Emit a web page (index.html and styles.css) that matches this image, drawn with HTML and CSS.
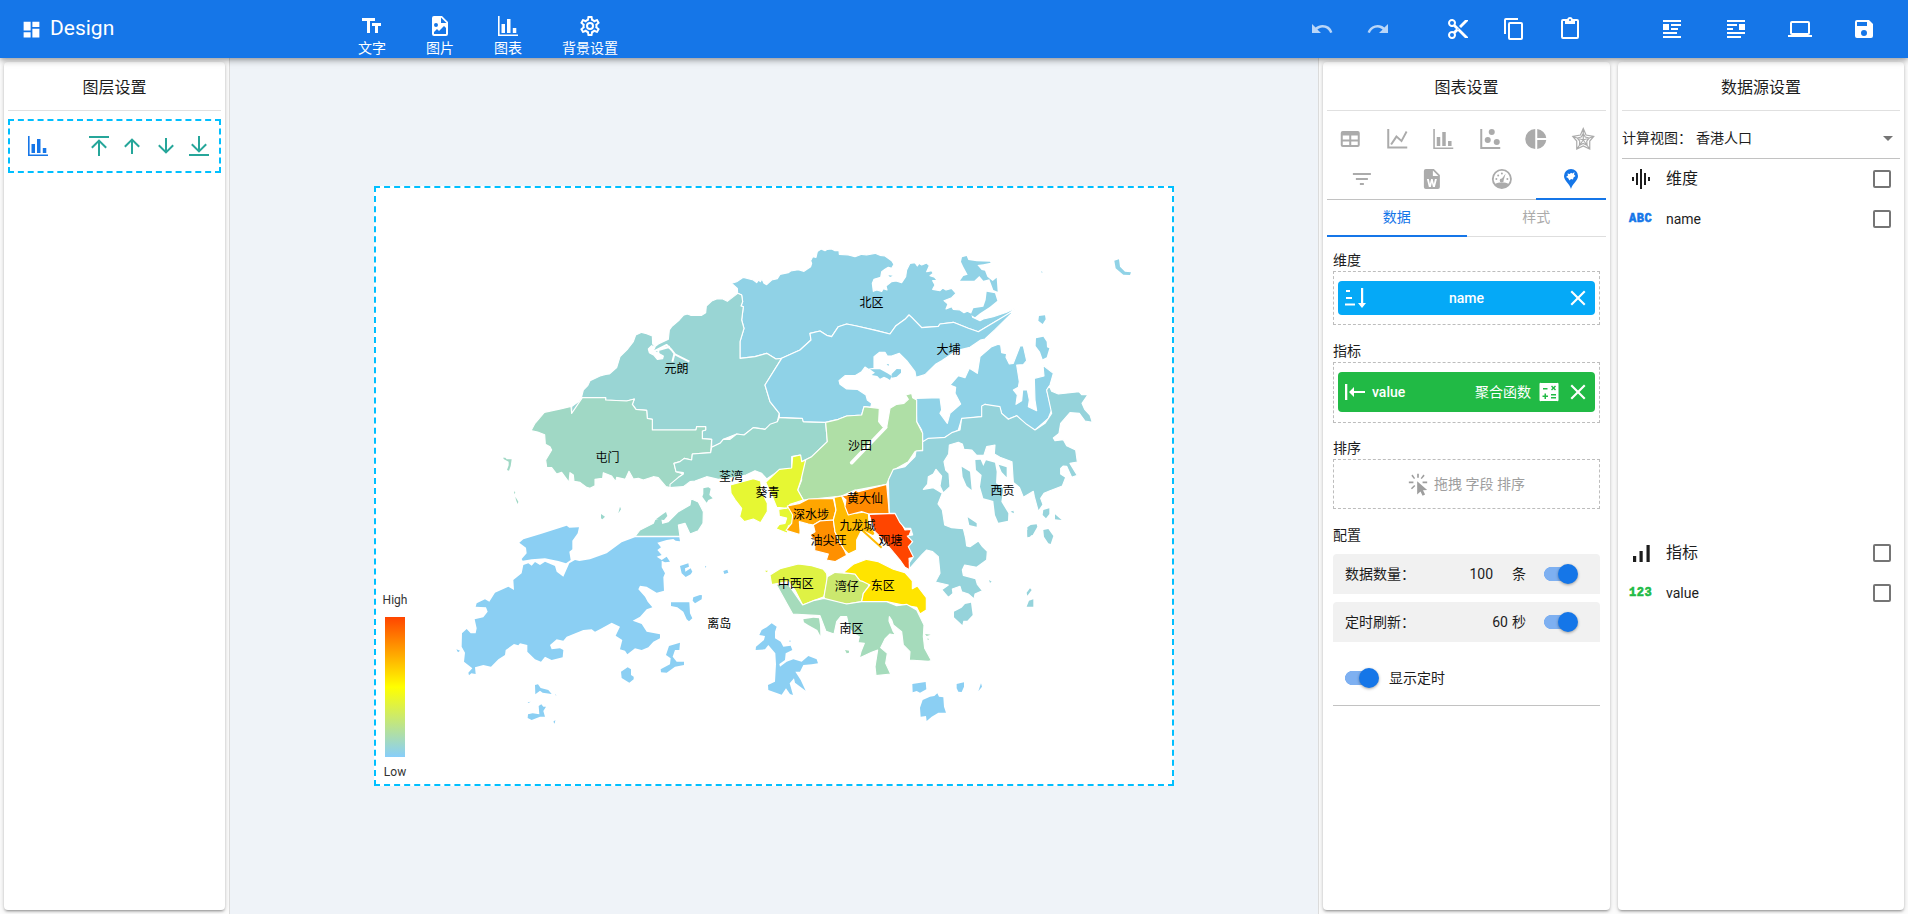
FILE: index.html
```html
<!DOCTYPE html>
<html lang="zh-CN">
<head>
<meta charset="utf-8">
<title>Design</title>
<link rel="stylesheet" href="styles.css">
</head>
<body>
<svg class="defs" width="0" height="0">
  <defs>
    <symbol id="bar" viewBox="0 0 24 24"><path d="M2 2h1.600v18.400H22V22H2zM5.500 10h3.500v9H5.500zM11 5h3.500v14H11zM16.800 14h3.500v5h-3.500z"/></symbol>
    <symbol id="up" viewBox="0 0 24 24"><path d="M13 20h-2V8l-5.500 5.500-1.400-1.400L12 4.200l7.900 7.900-1.400 1.400L13 8z"/></symbol>
    <symbol id="down" viewBox="0 0 24 24"><path d="M11 4h2v12l5.500-5.500 1.400 1.400L12 19.800l-7.900-7.900 1.400-1.400L11 16z"/></symbol>
    <symbol id="close" viewBox="0 0 24 24"><path d="M19.500 6L18 4.500l-6 6-6-6L4.500 6l6 6-6 6L6 19.500l6-6 6 6 1.500-1.500-6-6z"/></symbol>
  </defs>
</svg>

<header class="topbar">
  <div class="brand">
    <svg class="brand-icon" viewBox="0 0 24 24"><path d="M3 3h8v10H3zM13 3h8v6h-8zM3 15h8v6H3zM13 11h8v10h-8z"/></svg>
    <span>Design</span>
  </div>
  <nav class="inserts">
    <div class="insert"><svg class="icon" viewBox="0 0 24 24"><path d="M2 4v3h5v12h3V7h5V4zM21 9h-9v3h3v7h3v-7h3z"/></svg><span>文字</span></div>
    <div class="insert"><svg class="icon" viewBox="0 0 24 24"><path fill-rule="evenodd" d="M14 2H6a2 2 0 0 0-2 2v16a2 2 0 0 0 2 2h12a2 2 0 0 0 2-2V8zM13 3.500L18.500 9H13zM8 9a2 2 0 1 1 0 4 2 2 0 0 1 0-4zM6 20v-2l3-3 2 2 5-5 2 2v6z"/></svg><span>图片</span></div>
    <div class="insert"><svg class="icon"><use href="#bar"/></svg><span>图表</span></div>
    <div class="insert insert-wide"><svg class="icon" viewBox="0 0 24 24"><path d="M12 8a4 4 0 1 1 0 8 4 4 0 0 1 0-8m0 2a2 2 0 1 0 0 4 2 2 0 0 0 0-4m-2 12c-.250 0-.460-.180-.500-.420l-.370-2.650c-.630-.250-1.170-.590-1.690-.990l-2.490 1.010c-.220.080-.490 0-.610-.220l-2-3.460c-.130-.220-.070-.490.120-.640l2.110-1.660L4.500 12l.070-1-2.110-1.630c-.190-.150-.250-.420-.120-.640l2-3.460c.120-.220.390-.310.610-.220l2.490 1c.520-.390 1.060-.730 1.690-.980l.370-2.650c.040-.240.250-.420.500-.420h4c.250 0 .460.180.500.420l.370 2.650c.630.250 1.170.590 1.690.980l2.490-1c.220-.090.490 0 .610.220l2 3.460c.130.220.070.490-.120.640L19.430 11l.070 1-.070 1 2.110 1.630c.190.150.250.420.120.640l-2 3.460c-.120.220-.390.310-.610.220l-2.490-1c-.520.390-1.060.730-1.690.980l-.370 2.650c-.040.240-.250.420-.500.420zm1.250-18l-.370 2.610c-1.200.250-2.260.890-3.030 1.780L5.440 7.350l-.750 1.300L6.800 10.200a5.500 5.500 0 0 0 0 3.600l-2.120 1.560.750 1.300 2.430-1.040c.770.880 1.820 1.520 3.010 1.760l.370 2.620h1.520l.370-2.610c1.190-.250 2.240-.890 3.010-1.770l2.430 1.040.750-1.300-2.120-1.550a5.500 5.500 0 0 0 0-3.610l2.110-1.550-.750-1.300-2.410 1.040a5.400 5.400 0 0 0-3.030-1.770L12.750 4z"/></svg><span>背景设置</span></div>
  </nav>
  <div class="tools">
    <svg class="icon faded" viewBox="0 0 24 24"><path d="M12.500 8c-2.650 0-5.050 1-6.900 2.600L2 7v9h9l-3.620-3.620a7.970 7.970 0 0 1 12.720 3.620l2.370-.780A10.500 10.500 0 0 0 12.500 8z"/></svg>
    <svg class="icon faded redo" viewBox="0 0 24 24"><path d="M18.400 10.600A10.500 10.500 0 0 0 1.540 15.220l2.360.780a8 8 0 0 1 12.720-3.620L13 16h9V7z"/></svg>
    <svg class="icon cut" viewBox="0 0 24 24"><path fill-rule="evenodd" d="M9.640 7.640A4 4 0 1 0 7.640 9.640L10 12l-2.360 2.360a4 4 0 1 0 2 2L12 14l7 7h3v-1zM6 8a2 2 0 1 1 0-4 2 2 0 0 1 0 4m0 12a2 2 0 1 1 0-4 2 2 0 0 1 0 4m6-7.500a.5.500 0 1 1 0-1 .5.500 0 0 1 0 1M19 3l-6 6 2 2 7-7V3z"/></svg>
    <svg class="icon copy" viewBox="0 0 24 24"><path d="M16 1H4a2 2 0 0 0-2 2v14h2V3h12zM19 5H8a2 2 0 0 0-2 2v14a2 2 0 0 0 2 2h11a2 2 0 0 0 2-2V7a2 2 0 0 0-2-2m0 16H8V7h11z"/></svg>
    <svg class="icon" viewBox="0 0 24 24"><path fill-rule="evenodd" d="M19 2h-4.180a3 3 0 0 0-5.640 0H5a2 2 0 0 0-2 2v16a2 2 0 0 0 2 2h14a2 2 0 0 0 2-2V4a2 2 0 0 0-2-2m-7 0a1 1 0 1 1 0 2 1 1 0 0 1 0-2m7 18H5V4h2v3h10V4h2z"/></svg>
    <svg class="icon wrap" viewBox="0 0 24 24"><path d="M3 3h18v2H3zM3 7h6v6H3zM11 7h10v2H11zM11 11h7v2h-7zM3 15h14v2H3zM3 19h18v2H3z"/></svg>
    <svg class="icon wrap2" viewBox="0 0 24 24"><path d="M3 3h18v2H3zM15 7h6v6h-6zM3 7h10v2H3zM3 11h6v2H3zM3 15h18v2H3zM3 19h14v2H3z"/></svg>
    <svg class="icon laptop" viewBox="0 0 24 24"><path fill-rule="evenodd" d="M20 18a2 2 0 0 0 2-2V6a2 2 0 0 0-2-2H4a2 2 0 0 0-2 2v10a2 2 0 0 0 2 2H0v2h24v-2zM4 6h16v10H4z"/></svg>
    <svg class="icon save" viewBox="0 0 24 24"><path fill-rule="evenodd" d="M17 3H5a2 2 0 0 0-2 2v14a2 2 0 0 0 2 2h14a2 2 0 0 0 2-2V7zM12 19a3 3 0 1 1 0-6 3 3 0 0 1 0 6m3-10H5V5h10z"/></svg>
  </div>
</header>

<main class="workspace">
  <aside class="drawer drawer-left">
    <section class="panel">
      <h2 class="panel-title">图层设置</h2>
      <div class="layer">
        <svg class="icon layer-type"><use href="#bar"/></svg>
        <svg class="icon" viewBox="0 0 24 24"><path d="M2 2h20v2H2zM11 22V9l-5.500 5.500-1.400-1.400L12 5.200l7.900 7.900-1.400 1.400L13 9v13z"/></svg>
        <svg class="icon"><use href="#up"/></svg>
        <svg class="icon"><use href="#down"/></svg>
        <svg class="icon" viewBox="0 0 24 24"><path d="M2 20h20v2H2zM11 2v13l-5.500-5.500-1.400 1.400L12 18.800l7.900-7.900-1.400-1.400L13 15V2z"/></svg>
      </div>
    </section>
  </aside>

  <div class="stage">
    <div class="board">
      <svg class="map" viewBox="376 188 796 596">
        <defs><linearGradient id="heat" x1="0" y1="0" x2="0" y2="1"><stop offset="0" stop-color="#ff4500"/><stop offset=".5" stop-color="#ffff00"/><stop offset="1" stop-color="#87cefa"/></linearGradient></defs>
        <g transform="translate(440 230) scale(.33333)" class="regions">
          <path class="north" d="M875 160 890 155 910 142 940 150 950 158 956 150 961 155 966 147 972 160 980 164 995 150 1012 146 1020 133 1045 128 1052 123 1075 119 1092 124 1112 110 1115 100 1112 92 1118 80 1128 82 1132 65 1143 57 1155 62 1162 58 1175 57 1185 62 1197 62 1198 73 1225 75 1245 80 1265 73 1280 75 1305 70 1320 76 1335 78 1355 92 1362 103 1355 115 1345 112 1335 118 1325 125 1322 142 1302 148 1297 160 1300 184 1310 180 1325 184 1330 176 1341 180 1338 168 1355 155 1368 153 1385 158 1397 140 1400 120 1410 100 1425 98 1432 108 1437 100 1445 105 1460 99 1468 107 1460 125 1475 122 1480 130 1470 137 1484 142 1492 152 1478 152 1485 165 1478 178 1500 182 1508 174 1518 180 1535 175 1548 190 1535 203 1512 212 1524 222 1518 237 1535 230 1540 238 1560 240 1572 248 1582 244 1595 250 1598 262 1620 272 1630 267 1660 260 1700 247 1725 235 1700 258 1670 272 1615 305 1585 295 1540 277 1500 282 1495 289 1445 293 1415 262 1407 255 1395 268 1368 287 1350 312 1310 302 1250 288 1220 282 1195 290 1175 320 1160 316 1140 303 1110 310 1113 330 1080 360 1025 385 1008 387 980 370 945 380 900 385 900 335 912 295 905 270 910 230 903 228 908 215 905 195 893 190 892 175z"/>
          <path class="yuen" d="M425 500 430 480 443 467 450 452 480 438 497 433 508 432 530 413 540 380 563 357 580 335 587 315 605 307 620 311 637 318 638 342 645 350 655 342 685 328 688 300 695 290 718 270 730 256 742 252 752 256 785 256 797 248 799 228 815 213 830 207 847 206 862 214 893 190 905 195 908 215 903 228 910 230 905 270 912 295 900 335 900 385 945 380 980 370 1008 387 1025 385 975 465 990 515 1018 550 1012 575 975 598 940 593 912 615 890 612 850 628 840 640 815 652 815 628 787 626 787 603 797 600 797 590 770 590 768 600 637 600 637 568 622 565 620 541 588 538 577 523 583 507 560 513 497 510 497 503 427 503 405 540 395 550 395 530 415 515z"/>
          <path class="tuen" d="M427 503 497 503 497 510 560 513 583 507 577 523 588 538 620 541 622 565 637 568 637 600 768 600 770 590 797 590 797 600 787 603 787 626 815 628 812 668 757 672 755 690 733 685 720 695 702 700 708 725 730 732 718 740 690 773 678 770 655 743 640 740 610 750 595 745 580 747 567 724 556 748 530 742 527 755 515 738 490 728 488 745 465 748 465 767 450 775 440 772 420 757 402 754 400 735 390 728 387 757 365 727 350 732 335 713 320 712 317 690 335 660 330 650 316 643 314 614 293 606 273 602 285 580 313 547 365 536 393 529 395 550z"/>
          <path class="tsuen" d="M690 773 690 763 718 740 730 732 730 728 708 725 702 700 720 695 733 685 755 690 757 672 812 668 815 652 840 640 850 628 870 628 890 612 912 615 940 593 975 598 990 583 1012 575 1018 562 1087 565 1090 575 1157 577 1162 635 1115 680 1085 695 1080 675 1055 680 1055 715 1020 720 980 747 965 730 945 722 918 735 890 742 835 748 800 740 765 753 750 755 730 770z"/>
          <path class="taipo" fill-rule="evenodd" d="M1025 385 1080 360 1113 330 1110 310 1140 303 1160 316 1175 320 1195 290 1220 282 1250 288 1310 302 1350 312 1368 287 1395 268 1407 255 1415 262 1445 293 1495 289 1500 282 1540 277 1585 295 1615 305 1670 272 1727 238 1665 299 1635 327 1622 330 1590 352 1550 362 1505 392 1488 402 1455 434 1428 442 1425 425 1400 392 1378 370 1355 378 1342 378 1335 367 1318 367 1302 380 1302 415 1285 418 1275 411 1265 425 1245 437 1215 437 1197 452 1200 463 1220 477 1252 478 1278 495 1282 510 1295 520 1292 532 1272 530 1265 555 1220 558 1195 568 1157 577 1090 575 1087 565 1018 562 1018 550 990 515 975 465zM1428 505 1500 503 1505 540 1500 550 1522 580 1530 550 1562 522 1545 490 1547 472 1530 465 1555 437 1575 443 1588 415 1605 425 1612 430 1620 380 1655 350 1675 343 1682 345 1685 368 1700 371 1698 382 1708 402 1720 400 1740 348 1750 348 1760 392 1750 404 1730 405 1738 455 1735 472 1720 480 1732 495 1728 523 1745 512 1748 480 1762 480 1768 510 1765 530 1790 542 1785 510 1783 445 1812 438 1809 406 1840 430 1830 465 1820 480 1835 540 1825 565 1785 600 1760 590 1730 557 1705 567 1685 550 1680 535 1635 523 1625 560 1565 567 1555 600 1515 622 1448 635 1445 600 1430 575z"/>
          <path class="taipo bare" d="M1290 418 1320 418 1342 430 1355 438 1350 450 1342 445 1332 440 1320 446 1312 438 1295 435 1305 428zM1355 432 1370 417 1383 418 1383 428 1370 440 1355 443zM1340 402 1347 403 1345 408zM1788 325 1810 320 1820 335 1821 352 1828 355 1820 382 1808 388 1800 365 1787 348zM1797 258 1815 256 1817 268 1808 282 1795 272z"/>
          <path class="north bare" d="M1566 82 1580 78 1585 90 1610 94 1650 95 1652 98 1630 103 1612 105 1625 120 1635 122 1642 140 1658 153 1670 143 1673 185 1660 180 1648 148 1630 152 1618 138 1603 152 1560 152 1570 138 1583 134 1570 110 1563 95zM1640 185 1665 190 1672 212 1650 230 1620 250 1605 262 1592 254 1600 235 1630 230 1637 210zM1345 136 1358 137 1350 141zM1804 123 1808 127 1805 128zM2023 92 2037 88 2040 110 2055 125 2073 127 2070 135 2050 134 2027 115z"/>
          <path class="shatin" d="M1157 577 1195 568 1220 558 1265 555 1272 530 1292 532 1318 535 1316 575 1328 590 1340 592 1350 535 1370 523 1392 520 1405 508 1397 495 1415 490 1418 503 1430 510 1430 575 1448 610 1448 660 1425 665 1405 695 1365 718 1350 740 1340 763 1240 782 1205 798 1090 810 1073 780 1085 750 1083 715 1085 695 1115 680 1162 635z"/>
          <path class="kwai" d="M1058 680 1082 675 1085 695 1097 690 1083 750 1073 780 1090 810 1050 823 1040 835 1010 832 995 795 977 757 1018 718 1055 714zM871 765 940 746 962 753 965 785 982 820 982 845 962 878 940 867 913 875 899 860 905 835 886 810 873 790zM1016 838 1050 832 1065 850 1060 880 1045 888 1042 910 1008 896 1018 883 1035 880 1040 864 1018 859z"/>
          <g transform="translate(840 570)">
            <path class="ssp" d="M202 258 240 250 265 237 340 235 348 270 340 300 300 303 280 315 265 312 238 305 240 330 240 344 198 331 215 310 218 285z"/>
            <path class="ytm" d="M280 315 300 303 340 300 345 335 358 365 372 388 380 406 345 425 319 420 325 402 284 392 285 365 270 345 285 335z"/>
            <path class="kc" d="M342 232 365 228 385 282 445 275 447 310 465 340 460 348 425 330 410 360 410 390 385 402 372 388 358 365 345 335 340 300 348 270z"/>
            <path class="ktline" d="M420 325 485 383"/>
            <path class="wts" d="M365 228 400 222 405 210 415 215 500 193 508 280 447 282 425 275 385 285 375 260 378 240z"/>
            <path class="kt" d="M447 283 525 280 540 300 555 330 575 328 565 352 580 355 572 380 582 412 567 415 570 450 555 442 540 420 490 360 465 335z"/>
            <path class="central" d="M150 465 180 446 235 432 275 437 310 448 320 460 322 480 312 530 280 542 248 555 225 510 205 485 155 494z"/>
            <path class="wanchai" d="M322 470 345 457 405 462 415 475 450 485 445 500 430 520 425 545 380 552 315 540 312 530z"/>
            <path class="east" d="M370 458 400 433 440 418 475 425 520 448 555 458 577 483 577 506 592 498 619 533 619 570 600 582 590 562 550 555 500 545 425 545 430 520 450 495 430 485 420 482 405 462z"/>
            <path class="south" d="M168 492 205 493 248 555 280 542 312 535 380 552 425 545 500 545 530 557 560 553 590 570 612 615 610 650 614 685 632 718 634 722 625 724 568 720 570 695 550 675 545 635 520 615 515 600 508 590 507 603 520 635 527 645 510 642 495 657 482 683 502 700 497 730 512 762 468 767 465 740 473 690 455 697 418 714 423 695 433 670 414 668 418 650 400 640 388 625 380 590 362 590 350 605 342 642 318 634 300 587 218 582 203 555z"/>
          </g>
          <g transform="translate(1320 450)">
            <path class="saikung" d="M128 185 145 175 195 172 215 158 240 150 245 115 305 110 305 78 315 73 360 80 365 100 385 118 410 107 440 133 465 150 495 130 515 100 500 30 508 18 515 34 535 42 597 35 605 44 624 44 606 70 614 88 630 105 637 127 615 123 598 100 570 98 542 130 537 160 520 174 525 182 550 179 560 197 587 210 592 246 570 250 592 286 575 292 560 259 550 258 542 265 542 282 557 292 547 318 510 332 492 340 482 355 489 374 475 394 463 350 460 334 430 352 418 322 400 307 396 245 360 232 343 222 345 195 320 200 312 225 290 226 275 210 252 208 247 192 235 187 208 195 206 222 192 245 197 270 207 280 210 320 190 339 180 318 185 288 168 268 160 282 145 290 143 312 130 328 160 323 187 340 174 372 187 390 194 435 215 443 250 446 257 475 260 498 270 500 295 483 306 498 322 514 320 540 290 562 254 555 247 570 250 586 287 596 292 613 307 632 285 642 282 657 265 642 245 635 240 619 217 627 219 640 205 652 185 629 205 615 166 606 180 580 175 530 158 515 140 510 125 525 88 567 88 548 100 530 85 500 98 485 82 468 98 465 92 445 75 445 60 428 45 400 28 400 25 300 40 268 75 260 105 230 108 213 128 212z"/>
            <path class="saikung bare" d="M286 240 302 239 310 258 318 241 345 248 350 275 348 310 370 325 364 365 385 400 384 422 355 428 345 405 340 363 330 360 310 355 300 320 305 285 288 270zM245 260 270 275 275 330 260 318 248 290zM356 254 380 262 380 292 365 276zM263 412 290 430 290 440 268 435zM490 390 508 385 508 402 498 415 488 405zM525 403 545 420 525 418zM442 442 452 435 470 433 472 440 458 465 443 468zM490 450 505 447 520 468 512 492 505 490 492 470zM222 695 245 683 255 672 273 668 278 705 262 722 250 722 247 735 222 712zM450 625 455 630 442 647 440 638zM447 662 460 658 460 680 440 680zM327 600 335 605 330 608zM392 395 400 392 402 400z"/>
          </g>
          <g transform="translate(0 780)">
            <path class="islands" d="M238 158 250 148 300 133 380 107 388 113 417 112 413 130 397 152 397 178 388 185 392 210 378 220 355 213 315 205 275 208 248 212 245 207 260 190 258 173z"/>
            <path class="islands" d="M585 142 718 142 720 154 707 152 700 147 680 150 652 158 663 172 652 180 665 195 650 200 665 210 680 200 690 215 675 217 665 212 665 232 675 250 670 262 672 302 650 308 620 290 600 287 595 298 615 320 623 335 637 352 620 358 600 380 578 392 605 402 620 425 660 433 660 445 640 455 625 472 605 480 585 475 562 493 555 482 540 478 547 450 527 437 540 410 515 398 485 415 465 425 455 418 430 420 380 440 370 452 350 448 330 465 335 478 360 475 370 480 368 502 335 510 315 500 303 515 285 508 262 485 262 465 240 460 235 466 222 462 197 480 195 495 175 508 153 530 130 525 105 532 107 552 94 550 87 556 85 548 97 535 72 515 75 488 65 470 66 430 80 417 92 430 107 430 110 415 104 388 130 382 143 365 138 352 107 350 110 340 135 328 148 335 165 308 205 290 222 300 220 270 245 250 250 225 265 220 275 227 285 216 300 225 315 215 345 228 350 245 370 260 388 220 405 210 418 213 450 208 500 190 545 157z"/>
            <path class="tsuen" d="M585 139 600 120 640 100 645 88 665 83 668 100 685 95 715 65 750 45 753 26 775 36 790 65 789 100 775 122 750 132 735 100 715 105 720 139z"/>
            <path class="tsuen bare" d="M790 -5 805 -8 812 -4 808 15 818 25 805 30 800 38 787 20 790 12zM483 72 495 80 487 88 483 85zM540 50 543 58 535 70zM648 88 665 75 678 66 682 78 672 90z"/>
            <path class="tuen bare" d="M189 -97 196 -97 200 -92 215 -92 212 -72 207 -58 201 -60 206 -74 206 -85 192 -92zM222 3 226 8 223 12M226 20 235 35 233 42 228 30z"/>
            <path class="islands" d="M720 228 745 220 747 230 735 235 736 245 752 235 757 245 752 253 737 261 725 250zM850 243 862 239 865 248 853 252zM760 322 780 315 786 316 785 328 765 340 758 332zM693 337 748 337 750 370 757 385 747 394 740 388 730 365 712 352 693 348zM543 545 563 532 573 538 573 555 581 560 581 568 568 578 545 564zM687 468 720 458 718 480 705 480 698 500 710 515 732 515 732 525 705 530 680 548 663 547 662 538 690 523 692 505 678 495zM285 585 294 583 302 594 325 600 335 612 308 608 300 602 286 613zM296 648 304 643 310 650 318 650 310 663 315 680 300 680 275 690 263 684 264 673 278 670 298 673zM49 478 60 482 54 487zM340 695 346 690 344 701zM345 612 350 617 346 615M795 227 799 230 796 233zM263 637 272 635 265 639z"/>
            <path class="south bare" d="M1090 388 1120 383 1137 385 1140 405 1141 437 1132 420 1105 405 1092 397z"/>
            <path class="central bare" d="M975 242 984 242 980 247z"/>
          </g>
          <g transform="translate(900 900)">
            <path class="islands" d="M65 300 80 292 95 280 110 290 105 305 105 325 122 335 130 350 152 347 157 360 137 370 135 390 118 402 120 410 140 395 160 388 185 395 205 378 230 388 234 400 215 403 190 405 180 425 166 425 182 450 197 482 165 458 162 445 149 460 159 495 150 492 138 475 125 494 85 480 84 465 105 455 108 402 106 370 85 345 75 358 47 360 48 350 72 330 75 318 58 315zM517 462 557 456 559 478 540 488 530 483 518 487zM650 462 672 457 672 470 665 486 655 485 650 475zM548 510 570 500 583 498 592 490 597 500 610 502 612 530 618 548 595 548 575 560 560 573 558 558 542 560 540 533zM723 460 726 470 715 484zM147 332 153 332 150 336z"/>
            <path class="saikung bare" d="M862 0 884 0 870 20 862 22z"/>
            <path class="south bare" d="M315 360 327 362 327 368 320 370zM555 312 572 314 560 318zM560 326 566 326 566 330zM190 268 200 264z"/>
          </g>
          <path class="water" d="M625 357 635 347 645 352 640 362 655 370 670 378 668 386 652 388 642 376 628 368z"/>
          <path class="stream" d="M640 365 680 345 695 360 705 373 748 395M655 380 655 360 690 350M703 373 697 395"/>
          <path class="shing" d="M1337 592 1235 698"/>
        </g>
        <g class="names">
          <text x="676.600" y="372.500">元朗</text><text x="607.600" y="462">屯门</text><text x="731" y="480.500">荃湾</text><text x="767.500" y="497">葵青</text><text x="871.600" y="307">北区</text><text x="948.500" y="354">大埔</text><text x="860" y="450">沙田</text><text x="865" y="503">黄大仙</text><text x="811" y="519">深水埗</text><text x="857.500" y="529.500">九龙城</text><text x="828.500" y="544.500">油尖旺</text><text x="890.500" y="544.500">观塘</text><text x="795.700" y="588">中西区</text><text x="846.700" y="591">湾仔</text><text x="882.700" y="590">东区</text><text x="851.600" y="633">南区</text><text x="719.300" y="628">离岛</text><text x="1002.600" y="495">西贡</text>
        </g>
        <rect x="385" y="617" width="20" height="140" fill="url(#heat)"/>
        <g class="scale"><text x="395" y="604">High</text><text x="395" y="776">Low</text></g>
      </svg>
    </div>
  </div>

  <aside class="drawer drawer-right">
    <section class="panel panel-chart">
      <h2 class="panel-title">图表设置</h2>
      <div class="types six">
        <svg class="icon" viewBox="0 0 24 24"><path fill-rule="evenodd" d="M4.500 4h15a2 2 0 0 1 2 2v12a2 2 0 0 1-2 2h-15a2 2 0 0 1-2-2V6a2 2 0 0 1 2-2m0 4.500v4H11v-4zm8.500 0v4h6.500v-4zm-8.500 6V18H11v-3.500zm8.500 0V18h6.500v-3.500z"/></svg>
        <svg class="icon" viewBox="0 0 24 24"><path d="M2 2h2v17.500h18v2H2zM5 17l6-9 5 4.500 4.500-8.500 1.700.900-5.700 10.600-5-4.500L6.700 18z"/></svg>
        <svg class="icon"><use href="#bar"/></svg>
        <svg class="icon" viewBox="0 0 24 24"><path d="M2 2h2v18h18v2H2z"/><circle cx="9.500" cy="13" r="3"/><circle cx="13.500" cy="5" r="3"/><circle cx="18.500" cy="15" r="3"/></svg>
        <svg class="icon" viewBox="0 0 24 24"><path d="M11 2v20a10 10 0 0 1 0-20m2 0v9h9a10 10 0 0 0-9-9m0 11v9a10 10 0 0 0 9-9z"/></svg>
        <svg class="icon line" viewBox="0 0 24 24"><path d="M12 1.500L14.800 8 22.500 9.500 18.500 14 18.500 22 12 19 5.500 22 5.500 14 1.500 9.500 9.200 8zM12 6.500L14 10 18 11 15.500 14.200 15.800 18.200 12 16.500 8.200 18.200 8.500 14.200 6 11 10 10zM12 1.500V13M22.500 9.500L12 13M18.500 22L12 13M5.500 22L12 13M1.500 9.500L12 13"/></svg>
      </div>
      <div class="types four">
        <svg class="icon" viewBox="0 0 24 24"><path d="M3 6h18v2H3zM6 11h12v2H6zM10 16h4v2h-4z"/></svg>
        <svg class="icon" viewBox="0 0 24 24"><path fill-rule="evenodd" d="M14 2H6a2 2 0 0 0-2 2v16a2 2 0 0 0 2 2h12a2 2 0 0 0 2-2V8zm-1 1.500L18.500 9H13zM7 12h2l1 5 1.200-5h1.600l1.200 5 1-5h2l-2 8h-2l-1-4.500-1 4.500H9z"/></svg>
        <svg class="icon" viewBox="0 0 24 24"><path fill-rule="evenodd" d="M12 2a10 10 0 1 1 0 20 10 10 0 0 1 0-20m0 1.800a8.200 8.200 0 0 0-6.500 13C8 15 16 15 18.500 16.800A8.200 8.200 0 0 0 12 3.800"/><path d="M15.800 6.500L13.800 13a2 2 0 1 1-1.700-1.500z"/><circle cx="6.500" cy="12" r="1"/><circle cx="8.300" cy="8.500" r="1"/><circle cx="12" cy="6.500" r="1"/><circle cx="17.500" cy="12" r="1"/></svg>
        <span class="type-active"><svg class="icon" viewBox="0 0 24 24"><path fill-rule="evenodd" d="M12 2a7 7 0 0 1 7 7c0 5-5.500 7.500-7 13C10.500 16.500 5 14 5 9a7 7 0 0 1 7-7m0 3.800L10.800 7 8.500 6.500 9 8.500l-2 1.500 2 1 1.500 2.500 1.500-1.500 2 .500.500-2 2-1.500-1.500-1.500L15.500 5l-2 1.500z"/></svg></span>
      </div>
      <div class="tabs"><span class="tab active">数据</span><span class="tab">样式</span></div>
      <div class="settings">
        <h3 class="label">维度</h3>
        <div class="drop drop-dim">
          <div class="chip chip-dim">
            <svg class="icon" viewBox="0 0 24 24"><path d="M3 4h4v2H3zM3 11h6v2H3zM2 17.500h10v2H2zM18 2h2.200v15H23l-4 5-4-5h3z"/></svg>
            <span class="chip-name">name</span>
            <svg class="icon"><use href="#close"/></svg>
          </div>
        </div>
        <h3 class="label">指标</h3>
        <div class="drop drop-metric">
          <div class="chip chip-metric">
            <svg class="icon" viewBox="0 0 24 24"><path d="M2 4h2.300v16H2zM6 12l5-5v4h11v2H11v4z"/></svg>
            <span>value</span>
            <span class="func">聚合函数</span>
            <svg class="icon calc" viewBox="0 0 24 24"><path fill-rule="evenodd" d="M4 3h16a1 1 0 0 1 1.500 1v16a1 1 0 0 1-1.500 1H4a1 1 0 0 1-1.500-1V4A1 1 0 0 1 4 3m2 5v1.500h4.500V8zm8-1.500L15.500 8 14 9.500l1 1L16.500 9l1.500 1.500 1-1L17.500 8 19 6.500l-1-1L16.500 7 15 5.500zM7.500 13.500v2h-2V17h2v2H9v-2h2v-1.500H9v-2zm6.500.5v1.500h5V14zm0 3v1.500h5V17z"/></svg>
            <svg class="icon"><use href="#close"/></svg>
          </div>
        </div>
        <h3 class="label">排序</h3>
        <div class="drop drop-sort">
          <svg class="icon hint-icon" viewBox="0 0 24 28"><path d="M11 1h2v5h-2zM1 10.500h5.500v2H1zM17.500 10.500H23v2h-5.500zM4 3.500L5.500 2l3 4.500-1.300 1zM18.500 2L20 3.500 16.500 7.500l-1.300-1zM3.500 18.500l4-4 1.300 1.300-4 4zM11 10l12 10.500-5 .5 2.500 5-3 1.500-2.500-5-4 3.500z"/></svg>
          <span>拖拽 字段 排序</span>
        </div>
        <h3 class="label label-config">配置</h3>
        <div class="config"><span>数据数量<b class="colon">：</b></span><span class="amount count">100</span><span>条</span><i class="toggle"></i></div>
        <div class="config"><span>定时刷新<b class="colon">：</b></span><span class="amount">60</span><span>秒</span><i class="toggle"></i></div>
        <div class="timer"><i class="toggle"></i><span>显示定时</span></div>
      </div>
    </section>

    <section class="panel panel-source">
      <h2 class="panel-title">数据源设置</h2>
      <div class="select"><span>计算视图<b class="colon">：</b></span><span>香港人口</span><i class="caret"></i></div>
      <div class="fields">
        <div class="field heading"><svg class="icon" viewBox="0 0 24 24"><path d="M7 18h2V6H7zM11 22h2V2h-2zM3 14h2v-4H3zM15 18h2V6h-2zM19 10v4h2v-4z"/></svg><span>维度</span><i class="check"></i></div>
        <div class="field"><b class="kind kind-text">ABC</b><span>name</span><i class="check"></i></div>
      </div>
      <div class="fields">
        <div class="field heading"><svg class="icon" viewBox="0 0 24 24"><path d="M4 15h3.200v6H4zM10.500 10h3.200v11h-3.200zM17.500 4h3.200v17h-3.200z"/></svg><span>指标</span><i class="check"></i></div>
        <div class="field"><b class="kind kind-number">123</b><span>value</span><i class="check"></i></div>
      </div>
    </section>
  </aside>
</main>
</body>
</html>
```

FILE: styles.css
```css
* { box-sizing: border-box; }
body { margin: 0; height: 914px; overflow: hidden; font: 14px/20px Roboto, "Noto Sans CJK SC", sans-serif; color: #1d1d1d; background: #fff; display: flex; flex-direction: column; }
h2, h3 { margin: 0; font-weight: 400; }
i { font-style: normal; flex: none; }
svg { fill: currentColor; display: block; flex: none; }
.defs { display: none; }
.icon { width: 24px; height: 24px; }
.colon { font-family: "Noto Sans CJK TC", sans-serif; font-weight: 400; line-height: 1; }

.topbar { height: 58px; flex: none; display: flex; background: #1576e8; color: #fff; z-index: 2; position: relative; box-shadow: 0 2px 4px -1px rgba(0,0,0,.2), 0 4px 5px rgba(0,0,0,.14), 0 1px 10px rgba(0,0,0,.12); }
.brand { width: 338px; padding-left: 21px; display: flex; align-items: center; gap: 8px; font-size: 21px; height: 56px; }
.brand-icon { width: 21px; height: 21px; margin-top: 3px; }
.inserts { display: flex; padding-top: 14px; width: 952px; }
.insert { width: 68px; display: flex; flex-direction: column; align-items: center; line-height: 20px; }
.insert-wide { width: 96px; }
.tools { display: flex; align-items: center; padding-left: 20px; }
.faded { opacity: .7; }
.redo { margin-left: 32px; }
.cut { margin-left: 56px; }
.copy { margin: 0 32px; }
.wrap { margin-left: 78px; }
.wrap2, .laptop, .save { margin-left: 40px; }

.workspace { flex: 1; display: flex; min-height: 0; }
.drawer { background: #fcfcfc; padding: 4px; display: flex; gap: 8px; flex: none; }
.drawer-left { width: 230px; border-right: 1px solid #dcdcdc; }
.drawer-right { width: 590px; border-left: 1px solid #dcdcdc; }
.panel { background: #fff; border-radius: 4px; box-shadow: 0 1px 5px rgba(0,0,0,.2), 0 2px 2px rgba(0,0,0,.14), 0 3px 1px -2px rgba(0,0,0,.12); padding: 0 4px; height: 848px; }
.drawer-left .panel { width: 221px; }
.panel-chart { width: 287px; }
.panel-source { width: 286px; }
.panel-title { height: 49px; border-bottom: 1px solid #e0e0e0; font-size: 16px; line-height: 51px; text-align: center; }

.layer { margin-top: 8px; height: 54px; border: 2px dashed #00bfff; display: flex; align-items: center; padding: 0 8px 0 16px; gap: 9.500px; color: #26a69a; }
.layer-type { color: #1576e8; margin-right: 27px; }

.stage { flex: 1; background: #eff3f8; padding: 128px 0 0 144px; }
.board { width: 800px; height: 600px; background: #fff; border: 2px dashed #00bfff; }
.map { width: 796px; height: 596px; }
.regions path { stroke: #fff; stroke-width: 3.400; stroke-linejoin: round; }
.regions .bare, .regions .islands { stroke: none; }
.north { fill: #90d2e6; }
.taipo { fill: #8fd2e7; }
.yuen { fill: #99d5d4; }
.tuen { fill: #a0d8c5; }
.tsuen { fill: #9bd7cc; }
.shatin { fill: #afdfa6; }
.saikung { fill: #95d3db; }
.islands { fill: #8bcff3; }
.south { fill: #a5dbbb; }
.kwai { fill: #e6f733; }
.central { fill: #dff244; }
.wanchai { fill: #cbe86e; }
.east { fill: #ffe400; }
.ssp { fill: #ffa600; }
.ytm { fill: #ff9000; }
.kc { fill: #ffbb00; }
.wts { fill: #ff8a00; }
.kt { fill: #ff4500; }
.regions .ktline { fill: none; stroke: #ffbb00; stroke-width: 6; }
.water { fill: #fff; }
.regions .stream { fill: none; stroke-width: 6; }
.regions .shing { fill: none; stroke-width: 11; stroke-linecap: round; }
.names, .scale { font-size: 12px; text-anchor: middle; fill: #000; }
.scale { fill: #333; }

.types { display: flex; align-items: center; color: #ababab; }
.types > * { flex: 1 1 0; }
.six { height: 55px; }
.four { height: 34px; border-bottom: 1px solid #c2c2c2; }
.four > .icon { margin-bottom: 8px; }
.type-active { color: #1576e8; height: 34px; margin-bottom: -1px; padding-top: 1px; border-bottom: 2px solid #1576e8; display: flex; justify-content: center; }
.line { fill: none; stroke: currentColor; stroke-width: 1.200; }
.tabs { display: flex; height: 37px; border-bottom: 1px solid #dedede; color: #ababab; text-align: center; line-height: 35px; }
.tab { flex: 1; }
.tab.active { color: #1576e8; border-bottom: 2px solid #1576e8; height: 37px; }
.settings { padding: 13px 6px 0; }
.label { font-size: 14px; height: 20px; line-height: 20px; margin-bottom: 1px; }
.drop { border: 1px dashed #bdbdbd; padding: 9px 4px; }
.drop-dim { height: 54px; margin-bottom: 16px; }
.drop-metric { height: 61px; margin-bottom: 15px; }
.drop-sort { height: 50px; display: flex; align-items: center; justify-content: center; gap: 6px; color: #9e9e9e; margin-bottom: 16px; }
.hint-icon { width: 20px; height: 25px; }
.chip { border-radius: 4px; color: #fff; display: flex; align-items: center; padding: 0 5px; font-weight: 500; }
.chip-dim { height: 34px; background: #05a9f7; }
.chip-metric { height: 40px; background: #21ba45; gap: 5px; }
.chip-name { flex: 1; text-align: center; }
.func { margin-left: auto; margin-right: 1px; font-weight: 400; }
.calc { width: 24px; height: 24px; }
.label-config { margin-bottom: 9px; }
.config { height: 40px; background: #f1f1f1; border-radius: 4px 4px 0 0; display: flex; align-items: center; padding: 0 22px 0 12px; margin-bottom: 8px; line-height: 38px; }
.config .amount { margin-left: auto; margin-right: 4px; }
.config .count { margin-right: 19px; }
.config .toggle { margin-left: 18px; }
.toggle { width: 34px; height: 20px; display: flex; align-items: center; justify-content: flex-end; background: linear-gradient(#7eb0f1, #7eb0f1) 7px 3px / 20px 14px no-repeat, radial-gradient(circle at 7px 10px, #7eb0f1 6.700px, transparent 7.300px) no-repeat; }
.toggle::before { content: ""; width: 20px; height: 20px; border-radius: 50%; background: #1576e8; box-shadow: 0 1px 3px rgba(0,0,0,.35); }
.timer { margin-top: 8px; height: 56px; border-bottom: 1px solid #c2c2c2; display: flex; align-items: center; gap: 10px; padding-left: 12px; }

.select { height: 48px; border-bottom: 1px solid #c2c2c2; display: flex; align-items: center; padding: 7px 7px 0 0; gap: 4px; }
.caret { margin-left: auto; border: 5px solid transparent; border-top-color: #757575; border-bottom: 0; }
.fields { height: 374px; }
.field { height: 40px; display: flex; align-items: center; padding: 0 9px 0 7px; gap: 13px; }
.field.heading { font-size: 16px; }
.kind { width: 24px; font: 700 12px/20px "Liberation Mono", monospace; letter-spacing: .6px; -webkit-text-stroke: .6px currentColor; }
.kind-text { color: #1576e8; }
.kind-number { color: #21ba45; }
.check { width: 18px; height: 18px; margin-left: auto; border: 2px solid #757575; border-radius: 2px; }
```
